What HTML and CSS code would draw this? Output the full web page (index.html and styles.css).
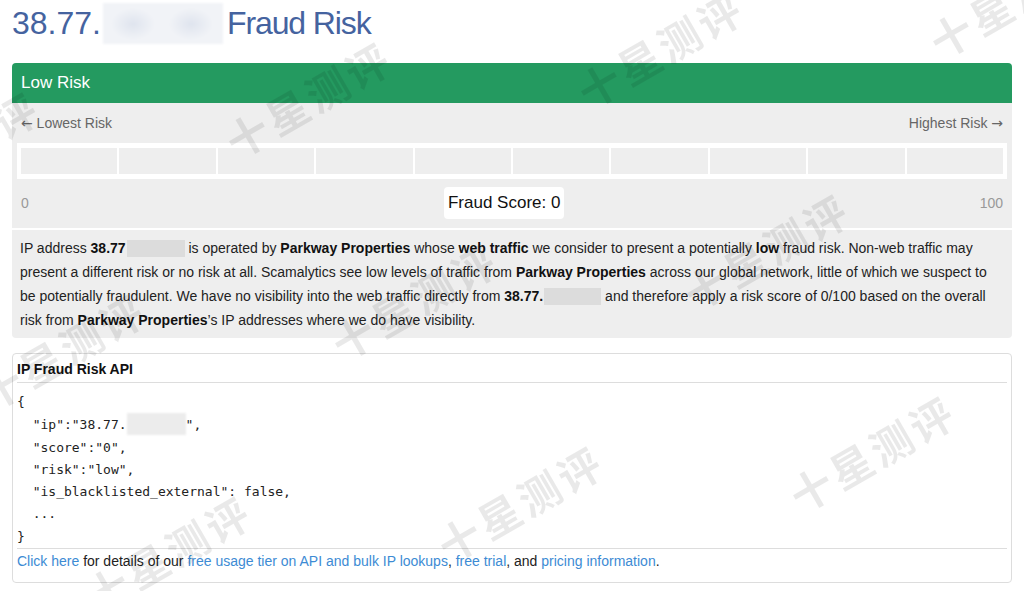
FILE: index.html
```html
<!DOCTYPE html>
<html lang="en">
<head>
<meta charset="utf-8">
<title>Fraud Risk</title>
<link rel="stylesheet" href="styles.css">
</head>
<body>
<div class="page">
  <h1 class="title">38.77.<span class="blur-title"></span><span class="title-text">Fraud Risk</span></h1>

  <div class="risk-card">
    <div class="risk-head">Low Risk</div>
    <div class="risk-body">
      <div class="scale-labels"><span><span class="arrow">&larr;</span> Lowest Risk</span><span>Highest Risk <span class="arrow">&rarr;</span></span></div>
      <div class="bar">
        <div class="cell"></div><div class="cell"></div><div class="cell"></div><div class="cell"></div><div class="cell"></div>
        <div class="cell"></div><div class="cell"></div><div class="cell"></div><div class="cell"></div><div class="cell"></div>
      </div>
      <div class="score-row">
        <span class="end">0</span>
        <span class="score">Fraud Score: 0</span>
        <span class="end">100</span>
      </div>
    </div>
    <div class="risk-text">
      IP address <b>38.77</b><span class="blur-inline b1"></span> is operated by <b>Parkway Properties</b> whose <b>web traffic</b> we consider to present a potentially <b>low</b> fraud risk. Non-web traffic may present a different risk or no risk at all. Scamalytics see low levels of traffic from <b>Parkway Properties</b> across our global network, little of which we suspect to be potentially fraudulent. We have no visibility into the web traffic directly from <b>38.77.</b><span class="blur-inline b2"></span> and therefore apply a risk score of 0/100 based on the overall risk from <b>Parkway Properties</b>’s IP addresses where we do have visibility.
    </div>
  </div>

  <div class="api-box">
    <div class="api-head">IP Fraud Risk API</div>
<pre class="api-code">{
  "ip":"38.77.<span class="blur-code"></span>",
  "score":"0",
  "risk":"low",
  "is_blacklisted_external": false,
  ...
}</pre>
    <div class="api-foot"><a href="#">Click here</a> for details of our <a href="#">free usage tier on API and bulk IP lookups</a>, <a href="#">free trial</a>, and <a href="#">pricing information</a>.</div>
  </div>
</div>

<div class="watermarks" aria-hidden="true">
  <span class="wm wm1">十星测评</span>
  <span class="wm wm2">十星测评</span>
  <span class="wm wm3">十星测评</span>
  <span class="wm wm4">十星测评</span>
  <span class="wm wm5">十星测评</span>
  <span class="wm wm6">十星测评</span>
  <span class="wm wm7">十星测评</span>
  <span class="wm wm8">十星测评</span>
  <span class="wm wm9">十星测评</span>
  <span class="wm wm10">十星测评</span>
</div>
</body>
</html>
```

FILE: styles.css
```css
* { box-sizing: border-box; }

html, body {
  margin: 0;
  padding: 0;
  background: #fff;
}

body {
  font-family: "Liberation Sans", Arial, sans-serif;
  font-size: 14px;
  color: #333;
  overflow: hidden;
}

.page {
  padding: 0 12px;
}

.title {
  margin: 3px 0 0;
  font-size: 32px;
  font-weight: normal;
  line-height: 41px;
  color: #45639f;
  white-space: nowrap;
}

.title-text {
  letter-spacing: -1.1px;
}

.blur-title {
  display: inline-block;
  vertical-align: top;
  width: 120px;
  height: 41px;
  margin: 0 4px 0 2px;
  background:
    radial-gradient(ellipse 22px 16px at 30px 21px, #dfe4ee, rgba(239,241,246,0) 100%),
    radial-gradient(ellipse 22px 16px at 88px 21px, #dfe4ee, rgba(239,241,246,0) 100%),
    #f1f3f7;
  filter: blur(1px);
}

.risk-card {
  margin-top: 19px;
}

.risk-head {
  height: 40px;
  line-height: 40px;
  padding: 0 9px;
  background: #249a60;
  color: #fff;
  font-size: 17px;
  border-radius: 4px 4px 0 0;
}

.risk-body {
  background: #eee;
  padding: 0 5px;
}

.scale-labels {
  display: flex;
  justify-content: space-between;
  height: 40px;
  line-height: 41px;
  padding: 0 4px;
  color: #666;
  font-size: 14px;
}

.arrow {
  font-family: "DejaVu Sans", sans-serif;
  font-size: 14px;
}

.bar {
  display: grid;
  grid-template-columns: repeat(10, 1fr);
  gap: 2px;
  padding: 5px 4px;
  background: #fff;
}

.cell {
  height: 26px;
  background: #eee;
}

.score-row {
  display: flex;
  align-items: center;
  justify-content: space-between;
  padding: 8px 4px 9px;
}

.end {
  color: #999;
  font-size: 14px;
}

.score {
  background: #fff;
  color: #111;
  font-size: 17px;
  line-height: 24px;
  padding: 4px 4px;
  border-radius: 4px;
}

.risk-text {
  margin-top: 2px;
  background: #eee;
  padding: 6px 8px;
  line-height: 24px;
  font-size: 14px;
  color: #222;
  border-radius: 0 0 4px 4px;
}

.risk-text b {
  color: #111;
}

.blur-inline {
  display: inline-block;
  vertical-align: -4px;
  height: 17px;
  background: #dcdcdc;
  filter: blur(0.6px);
}

.b1 { width: 58px; margin-left: 1px; }
.b2 { width: 57px; margin-left: 1px; }

.api-box {
  margin-top: 15px;
  border: 1px solid #ddd;
  border-radius: 4px;
  padding: 0 4px 9px;
}

.api-head {
  height: 29px;
  line-height: 30px;
  font-weight: bold;
  font-size: 14px;
  color: #111;
  border-bottom: 1px solid #ddd;
}

.api-code {
  margin: 8px 0 0;
  font-family: "DejaVu Sans Mono", "Liberation Mono", monospace;
  font-size: 13px;
  line-height: 22.3px;
  color: #222;
  border-bottom: 1px solid #ddd;
}

.blur-code {
  display: inline-block;
  vertical-align: -6px;
  width: 59px;
  height: 22px;
  background: #ececec;
  filter: blur(0.8px);
}

.api-foot {
  line-height: 24px;
  font-size: 14px;
  color: #222;
}

.api-foot a {
  color: #3d8bd4;
  text-decoration: none;
}

.watermarks {
  position: fixed;
  inset: 0;
  pointer-events: none;
  overflow: hidden;
}

.wm {
  position: absolute;
  white-space: nowrap;
  font-family: "Noto Sans CJK SC", sans-serif;
  font-weight: bold;
  font-size: 42px;
  letter-spacing: 4px;
  color: rgba(0, 0, 0, 0.085);
  transform: translate(-50%, -50%) rotate(-30deg);
}

.wm1 { left: -44px; top: 148px; }
.wm2 { left: 308px; top: 98px; }
.wm3 { left: 660px; top: 48px; }
.wm4 { left: 1012px; top: -2px; }
.wm5 { left: 62px; top: 350px; }
.wm6 { left: 414px; top: 300px; }
.wm7 { left: 766px; top: 250px; }
.wm8 { left: 168px; top: 552px; }
.wm9 { left: 520px; top: 502px; }
.wm10 { left: 872px; top: 452px; }
```
